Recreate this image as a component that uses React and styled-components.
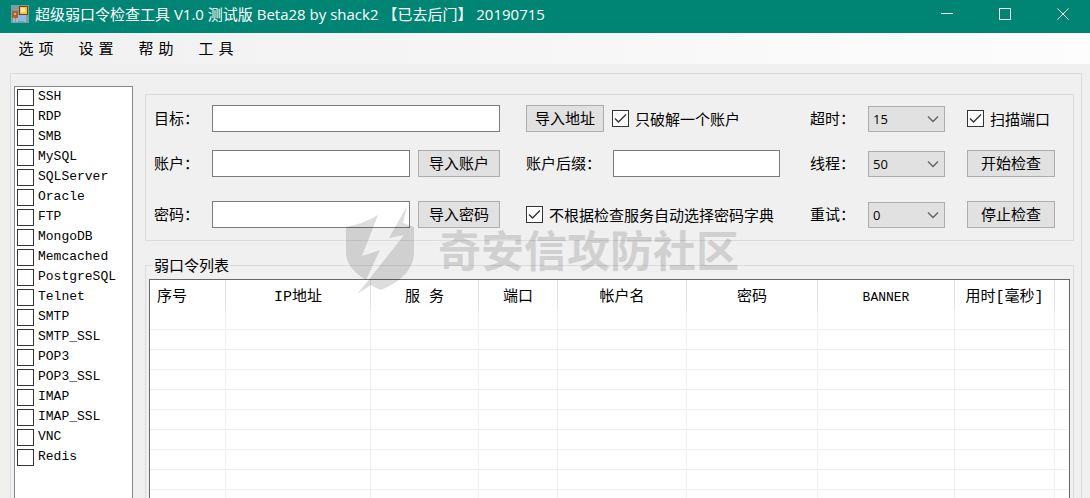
import React from "react";
import styled, { createGlobalStyle, css } from "styled-components";

const GlobalStyle = createGlobalStyle`
  * { box-sizing: border-box; }
  body {
    margin: 0;
    background: #f0f0f0;
    color: #000;
    font-family: "Noto Sans CJK SC", sans-serif;
    font-size: 15px;
    line-height: 20px;
  }
  button, input, select { font: inherit; color: inherit; margin: 0; }
`;

const Window = styled.div`
  position: relative;
  display: flex;
  flex-direction: column;
  height: 100vh;
  overflow: hidden;
`;

const TitleBar = styled.header`
  display: flex;
  align-items: center;
  flex: none;
  height: 33px;
  padding-left: 11px;
  background: #008575;
  color: #fff;
`;

const Title = styled.h1`
  flex: 1;
  margin: 0 0 6px 6px;
  font: 400 15px/20px "Open Sans", "Noto Sans CJK SC", sans-serif;
  white-space: pre;
`;

const AppIcon = styled.svg`
  flex: none;
  margin-bottom: 6px;
`;

const WindowButton = styled.button`
  display: grid;
  place-items: center;
  width: 58px;
  height: 33px;
  padding: 0 0 6px 4px;
  border: 0;
  background: none;
`;

const MenuBar = styled.nav`
  display: flex;
  flex: none;
  gap: 24px;
  height: 31px;
  padding: 0 18px;
  background: linear-gradient(to right, #f0f0f0, #fdfdfd);
`;

const MenuItem = styled.button`
  width: 36px;
  height: 31px;
  padding: 0;
  border: 0;
  background: none;
  font-family: "DejaVu Sans", "Noto Sans CJK SC", sans-serif;
  white-space: nowrap;
`;

const Frame = styled.main`
  display: flex;
  flex: 1;
  gap: 12px;
  min-height: 0;
  margin: 9px 8px 0 10px;
  padding: 12px 7px 0 3px;
  border: 1px solid #dcdcdc;
  border-bottom: 0;
`;

const ServiceList = styled.div`
  flex: none;
  width: 119px;
  padding: 0 2px;
  border: 1px solid #828790;
  border-bottom: 0;
  background: #fff;
`;

const CheckLabel = styled.label`
  display: flex;
  align-items: center;
  gap: 6px;
  height: 27px;
  white-space: nowrap;
  ${(p) => p.$list && css`
    gap: 4px;
    height: 20px;
    font: 13px/18px "Liberation Mono", monospace;
  `}
`;

const Check = styled.input`
  appearance: none;
  flex: none;
  width: 17px;
  height: 17px;
  border: 1px solid #333;
  background: #fff;
  &:checked {
    background: #fff url("data:image/svg+xml,%3Csvg xmlns='http://www.w3.org/2000/svg' viewBox='0 0 15 15'%3E%3Cpath d='M2 7.5 5.5 11 13 3.5' fill='none' stroke='%23333' stroke-width='1.4'/%3E%3C/svg%3E") center / 15px 15px;
  }
`;

const Content = styled.div`
  display: flex;
  flex: 1;
  flex-direction: column;
  min-width: 0;
  padding-top: 8px;
`;

const Settings = styled.form`
  display: grid;
  grid-template-columns: minmax(0, 1fr) 258px 245px;
  grid-template-rows: 45px 51px 27px;
  column-gap: 26px;
  padding: 10px 18px 12px 8px;
  border: 1px solid #dcdcdc;
`;

const Cell = styled.div`
  display: flex;
  height: 27px;
  gap: 8px;
`;

const Field = styled.label`
  display: flex;
  flex: ${(p) => (p.$fixed ? "none" : "1")};
  align-items: center;
  min-width: 0;
`;

const Caption = styled.span`
  flex: none;
  width: ${(p) => (p.$wide ? "87px" : "58px")};
  padding-bottom: 2px;
  white-space: nowrap;
`;

const TextBox = styled.input`
  flex: 1;
  min-width: 0;
  width: ${(p) => (p.$suffix ? "167px" : "100%")};
  height: 27px;
  padding: 0 4px;
  border: 1px solid #7a7a7a;
  background: #fff;
`;

const PushButton = styled.button`
  flex: none;
  width: ${(p) => p.$width}px;
  height: 27px;
  padding: 0 0 2px;
  border: 1px solid #adadad;
  background: #e1e1e1;
  white-space: nowrap;
`;

const SelectBox = styled.select`
  appearance: none;
  width: 77px;
  height: 26px;
  margin-right: 14px;
  padding: 0 4px;
  border: 1px solid #adadad;
  border-radius: 0;
  font: 13px/20px "Open Sans", sans-serif;
  background: #e1e1e1 url("data:image/svg+xml,%3Csvg xmlns='http://www.w3.org/2000/svg' viewBox='0 0 12 8'%3E%3Cpath d='M1 1.5 6 6.5 11 1.5' fill='none' stroke='%23606060' stroke-width='1.3'/%3E%3C/svg%3E") right 5px center / 12px 8px no-repeat;
`;

const Results = styled.fieldset`
  flex: 1;
  min-width: 0;
  min-height: 0;
  margin: 14px 0 0;
  padding: 4px 3px 0;
  border: 1px solid #dcdcdc;
  border-bottom: 0;
`;

const Legend = styled.legend`
  margin-left: 4px;
  padding: 0 1px;
`;

const TableFrame = styled.div`
  height: 100%;
  border: 1px solid #686868;
  border-bottom: 0;
  background: #fff;
  overflow: hidden;
`;

const Table = styled.table`
  width: 100%;
  table-layout: fixed;
  border-collapse: separate;
  border-spacing: 0;
`;

const Head = styled.th`
  height: 30px;
  padding: 5px 7px 0;
  border-right: 1px solid #e2e2e2;
  font: 400 15px/20px "Liberation Mono", "Noto Sans CJK SC", monospace;
  text-align: ${(p) => p.$align || "center"};
  white-space: pre;
  ${(p) => p.$latin && css`font-size: 13px;`}
  &:last-child { border-right: 0; }
`;

const EmptyCell = styled.td`
  height: 20px;
  padding: 0;
  border-right: 1px solid #f0f0f0;
  border-bottom: 1px solid #f0f0f0;
  &:last-child { border-right: 0; }
`;

const Watermark = styled.div`
  position: absolute;
  left: 345px;
  top: 206px;
  display: flex;
  align-items: center;
  gap: 24px;
  color: #000;
  opacity: 0.13;
  pointer-events: none;
  font: 700 43px/84px "Noto Sans CJK SC", sans-serif;
  white-space: nowrap;
  svg { overflow: visible; }
`;

const services = ["SSH", "RDP", "SMB", "MySQL", "SQLServer", "Oracle", "FTP", "MongoDB", "Memcached", "PostgreSQL", "Telnet", "SMTP", "SMTP_SSL", "POP3", "POP3_SSL", "IMAP", "IMAP_SSL", "VNC", "Redis"];

const columns = [
  { name: "序号", width: 76, align: "left" },
  { name: "IP地址", width: 145 },
  { name: "服 务", width: 108 },
  { name: "端口", width: 79 },
  { name: "帐户名", width: 129 },
  { name: "密码", width: 131 },
  { name: "BANNER", width: 137, latin: true },
  { name: "用时[毫秒]", width: 100 },
  { name: "" },
];

const Option = ({ label, value }) => (
  <Field $fixed>
    <Caption>{label}</Caption>
    <SelectBox defaultValue={value}>
      <option>{value}</option>
    </SelectBox>
  </Field>
);

export default function App() {
  return (
    <Window>
      <GlobalStyle />
      <TitleBar>
        <AppIcon width="18" height="18" viewBox="0 0 18 18" aria-hidden="true">
          <rect width="18" height="18" fill="#7c9ca6" />
          <path d="M3 13v4M6 13v4M14 11v6" stroke="#d5dde2" />
          <rect x="7" y="10" width="8" height="6" fill="#8dbbe8" />
          <rect x="1" y="6" width="6" height="7" fill="#b0602c" />
          <rect x="3" y="8" width="2" height="2" fill="#e8a878" />
          <rect x="8.5" y="1.5" width="8" height="8" fill="#f6c744" stroke="#6e4416" />
          <rect x="10" y="3" width="4" height="4" fill="#fde79a" />
        </AppIcon>
        <Title>超级弱口令检查工具 V1.0 测试版 Beta28 by shack2 【已去后门】 20190715</Title>
        <WindowButton aria-label="最小化">
          <svg width="12" height="12" viewBox="0 0 12 12"><path d="M0 5.5H12" stroke="#fff" /></svg>
        </WindowButton>
        <WindowButton aria-label="最大化">
          <svg width="12" height="12" viewBox="0 0 12 12"><path d="M.5.5h11v11H.5z" fill="none" stroke="#fff" /></svg>
        </WindowButton>
        <WindowButton aria-label="关闭">
          <svg width="12" height="12" viewBox="0 0 12 12"><path d="M.5.5l11 11M11.5.5l-11 11" stroke="#fff" /></svg>
        </WindowButton>
      </TitleBar>
      <MenuBar>
        {["选 项", "设 置", "帮 助", "工 具"].map((m) => <MenuItem key={m}>{m}</MenuItem>)}
      </MenuBar>
      <Frame>
        <ServiceList>
          {services.map((s) => (
            <CheckLabel key={s} $list><Check type="checkbox" />{s}</CheckLabel>
          ))}
        </ServiceList>
        <Content>
          <Settings onSubmit={(e) => e.preventDefault()}>
            <Cell>
              <Field><Caption>目标：</Caption><TextBox type="text" /></Field>
            </Cell>
            <Cell>
              <PushButton type="button" $width={78}>导入地址</PushButton>
              <CheckLabel><Check type="checkbox" defaultChecked />只破解一个账户</CheckLabel>
            </Cell>
            <Cell>
              <Option label="超时：" value="15" />
              <CheckLabel><Check type="checkbox" defaultChecked />扫描端口</CheckLabel>
            </Cell>
            <Cell>
              <Field><Caption>账户：</Caption><TextBox type="text" /></Field>
              <PushButton type="button" $width={82}>导入账户</PushButton>
            </Cell>
            <Cell>
              <Field $fixed><Caption $wide>账户后缀：</Caption><TextBox type="text" $suffix /></Field>
            </Cell>
            <Cell>
              <Option label="线程：" value="50" />
              <PushButton type="submit" $width={88}>开始检查</PushButton>
            </Cell>
            <Cell>
              <Field><Caption>密码：</Caption><TextBox type="text" /></Field>
              <PushButton type="button" $width={82}>导入密码</PushButton>
            </Cell>
            <Cell>
              <CheckLabel><Check type="checkbox" defaultChecked />不根据检查服务自动选择密码字典</CheckLabel>
            </Cell>
            <Cell>
              <Option label="重试：" value="0" />
              <PushButton type="button" $width={88}>停止检查</PushButton>
            </Cell>
          </Settings>
          <Results>
            <Legend>弱口令列表</Legend>
            <TableFrame>
              <Table>
                <colgroup>
                  {columns.map((c) => <col key={c.name} width={c.width} />)}
                </colgroup>
                <thead>
                  <tr>{columns.map((c) => <Head key={c.name} $align={c.align} $latin={c.latin}>{c.name}</Head>)}</tr>
                </thead>
                <tbody>
                  {Array.from({ length: 10 }, (_, i) => (
                    <tr key={i}>{columns.map((c) => <EmptyCell key={c.name} />)}</tr>
                  ))}
                </tbody>
              </Table>
            </TableFrame>
          </Results>
        </Content>
      </Frame>
      <Watermark aria-hidden="true">
        <svg width="69" height="84" viewBox="0 0 69 84" fill="currentColor">
          <path d="M1 21Q18 18 33 9L17 50 35 44 21 74Q1 62 1 46Z" />
          <path d="M62 0 44 32 59 29 22 76 12 88 26 79Q30 82 36 84 69 70 69 46V21L58 17Z" />
        </svg>
        奇安信攻防社区
      </Watermark>
    </Window>
  );
}
